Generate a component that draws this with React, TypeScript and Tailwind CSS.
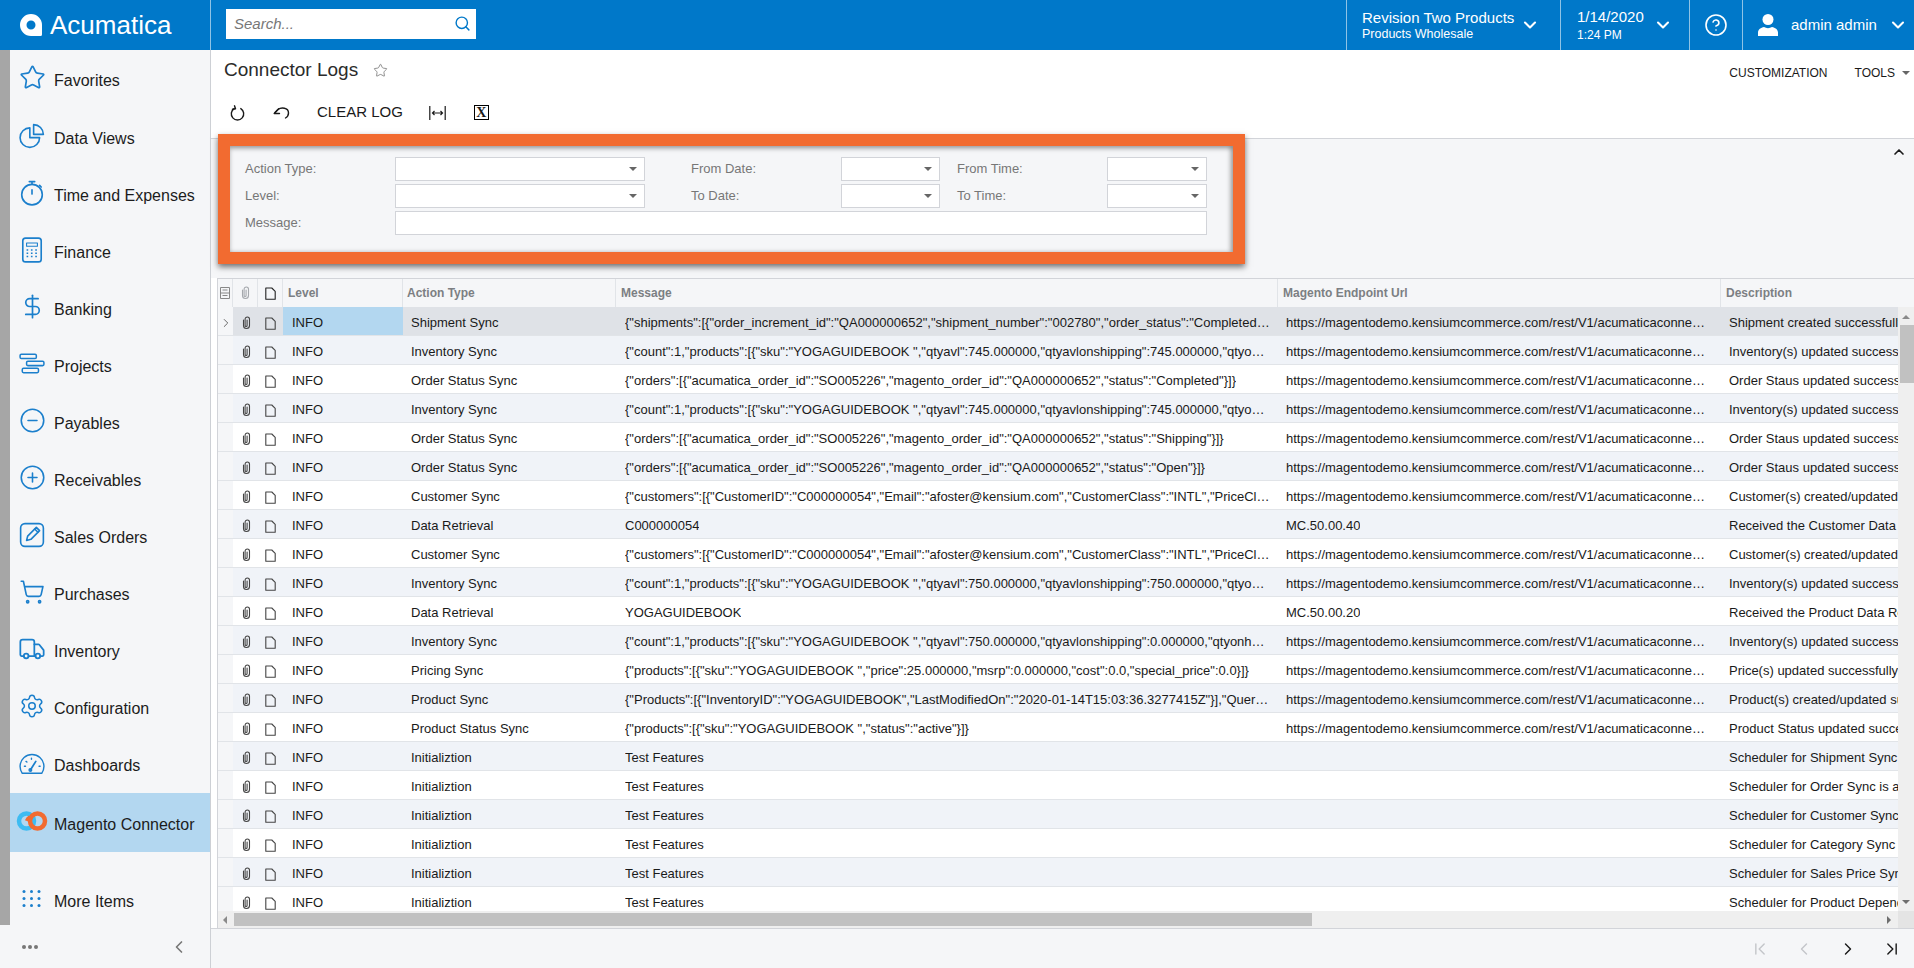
import React from "react";
import {
  ChevronDown,
  ChevronFirst,
  ChevronLast,
  ChevronLeft,
  ChevronRight,
  ChevronUp,
  CircleHelp,
  CircleMinus,
  CirclePlus,
  DollarSign,
  Search,
  Settings,
  ShoppingCart,
  Star,
  Truck,
} from "lucide-react";

const ICON = "#1b7fcc";
const COLS = "grid grid-cols-[15px_25px_25px_120px_213px_662px_443px_300px]";

const svgProps = {
  width: 26,
  height: 26,
  viewBox: "0 0 24 24",
  fill: "none",
  stroke: ICON,
  strokeWidth: 1.5,
  strokeLinecap: "round" as const,
  strokeLinejoin: "round" as const,
};

function PieIcon() {
  return (
    <svg {...svgProps}>
      <path d="M10 4.5a9 9 0 1 0 9 9h-9z" />
      <path d="M13.5 1.5a9 9 0 0 1 9 9h-9z" />
    </svg>
  );
}

function TimerIcon() {
  return (
    <svg {...svgProps}>
      <circle cx="12" cy="13.5" r="9.5" />
      <path d="M12 4V1.5M9.5 1.5h5M19 5l1.5 1.5M12 9v4" />
    </svg>
  );
}

function CalcIcon() {
  return (
    <svg {...svgProps}>
      <rect x="3.5" y="1" width="17" height="22" rx="2.5" />
      <path d="M7 5.5h10v3H7z" strokeWidth="1" />
      <path
        d="M7 12h1.5M11 12h1.5M15 12h1.5M7 15h1.5M11 15h1.5M15 15h1.5M7 18h1.5M11 18h1.5M15 18h1.5"
        strokeWidth="1.3"
        strokeLinecap="butt"
      />
    </svg>
  );
}

function ProjectsIcon() {
  return (
    <svg {...svgProps} strokeWidth={1.4}>
      <rect x="1" y="3" width="15" height="4" rx="1.2" />
      <rect x="7" y="9.5" width="16" height="4" rx="1.2" />
      <rect x="3" y="16" width="15" height="4" rx="1.2" />
    </svg>
  );
}

function OrdersIcon() {
  return (
    <svg {...svgProps}>
      <rect x="1.5" y="1.5" width="21" height="21" rx="4" />
      <path d="M7 17l1-4 8-8 3 3-8 8z" />
      <path d="M14.5 6.5l3 3" />
    </svg>
  );
}

function GaugeIcon() {
  return (
    <svg {...svgProps} strokeWidth={1.3}>
      <path d="M3 21.5a11 11 0 1 1 18 0z" />
      <path d="M10.5 18.5l5-8" strokeWidth="1.6" />
      <circle cx="10.5" cy="18.5" r="1.2" />
      <path d="M5 15h1M6.5 10.5l1 .8M11.5 7.5v1M18.5 15h1" strokeDasharray="1 1" />
    </svg>
  );
}

function RingsIcon() {
  return (
    <svg width="32" height="20" viewBox="0 0 32 20" fill="none" strokeWidth="4.5">
      <circle cx="10.5" cy="10" r="7.5" stroke="#3dbcf2" />
      <circle cx="21.5" cy="10" r="7.5" stroke="#f26b30" />
      <path d="M14 6.5a7.5 7.5 0 0 0-3 3.5" stroke="#f26b30" />
    </svg>
  );
}

function DotsIcon() {
  const cells = [0, 1, 2];
  return (
    <svg width="26" height="26" viewBox="0 0 26 26" fill={ICON}>
      {cells.map((r) =>
        cells.map((c) => <circle key={`${r}-${c}`} cx={5 + c * 7.5} cy={5.5 + r * 7} r="1.5" />),
      )}
    </svg>
  );
}

function Logo() {
  return (
    <svg width="22" height="22" viewBox="0 0 22 22">
      <path
        fill="#fff"
        fillRule="evenodd"
        d="M11 0a11 11 0 0 1 11 11v9.5a1.5 1.5 0 0 1-1.5 1.5H11a11 11 0 0 1 0-22zm0 6.5a4.5 4.5 0 1 0 0 9 4.5 4.5 0 0 0 0-9z"
      />
    </svg>
  );
}

function Clip({ color = "#444" }: { color?: string }) {
  return (
    <svg width="9" height="14" viewBox="0 0 9 14" fill="none" stroke={color} strokeWidth="1.1" strokeLinecap="round">
      <path d="M1.5 4v5.5a3 3 0 0 0 6 0V3.2a2.2 2.2 0 0 0-4.4 0v6.3a1 1 0 0 0 2 0V4" />
    </svg>
  );
}

function Note({ color = "#444" }: { color?: string }) {
  return (
    <svg width="11" height="13" viewBox="0 0 11 13" fill="none" stroke={color} strokeWidth="1.1" strokeLinejoin="round">
      <path d="M.8 1h6l3.4 3.4v7.8H.8z" />
    </svg>
  );
}

function Caret() {
  return <span className="block border-x-[4px] border-t-[4px] border-x-transparent border-t-[#666]" />;
}

const navItems: { label: string; icon: React.ReactNode }[] = [
  { label: "Data Views", icon: <PieIcon /> },
  { label: "Time and Expenses", icon: <TimerIcon /> },
  { label: "Finance", icon: <CalcIcon /> },
  { label: "Banking", icon: <DollarSign size={27} color={ICON} strokeWidth={1.5} /> },
  { label: "Projects", icon: <ProjectsIcon /> },
  { label: "Payables", icon: <CircleMinus size={27} color={ICON} strokeWidth={1.4} /> },
  { label: "Receivables", icon: <CirclePlus size={27} color={ICON} strokeWidth={1.4} /> },
  { label: "Sales Orders", icon: <OrdersIcon /> },
  { label: "Purchases", icon: <ShoppingCart size={26} color={ICON} strokeWidth={1.5} /> },
  { label: "Inventory", icon: <Truck size={28} color={ICON} strokeWidth={1.5} /> },
  { label: "Configuration", icon: <Settings size={26} color={ICON} strokeWidth={1.4} /> },
  { label: "Dashboards", icon: <GaugeIcon /> },
];

function NavRow({ label, icon, className = "h-[57px]" }: { label: string; icon: React.ReactNode; className?: string }) {
  return (
    <div className={`flex items-center pl-2 pt-[2px] text-[16px] text-[#1c1c1c] ${className}`}>
      <span className="mb-[6px] flex w-7 justify-center">{icon}</span>
      <span className="ml-2 whitespace-nowrap">{label}</span>
    </div>
  );
}

const URL = "https://magentodemo.kensiumcommerce.com/rest/V1/acumaticaconnector/index/sync";
const INV_745 =
  '{"count":1,"products":[{"sku":"YOGAGUIDEBOOK ","qtyavl":745.000000,"qtyavlonshipping":745.000000,"qtyonhand":745.000000}]}';
const CUST =
  '{"customers":[{"CustomerID":"C000000054","Email":"afoster@kensium.com","CustomerClass":"INTL","PriceClass":"RETAIL"}]}';
const order = (s: string) =>
  `{"orders":[{"acumatica_order_id":"SO005226","magento_order_id":"QA000000652","status":"${s}"}]}`;

const rows: [string, string, string, string][] = [
  [
    "Shipment Sync",
    '{"shipments":[{"order_increment_id":"QA000000652","shipment_number":"002780","order_status":"Completed","items":[]}]}',
    URL,
    "Shipment created successfully",
  ],
  ["Inventory Sync", INV_745, URL, "Inventory(s) updated successfully"],
  ["Order Status Sync", order("Completed"), URL, "Order Staus updated successfully"],
  ["Inventory Sync", INV_745, URL, "Inventory(s) updated successfully"],
  ["Order Status Sync", order("Shipping"), URL, "Order Staus updated successfully"],
  ["Order Status Sync", order("Open"), URL, "Order Staus updated successfully"],
  ["Customer Sync", CUST, URL, "Customer(s) created/updated successfully"],
  ["Data Retrieval", "C000000054", "MC.50.00.40", "Received the Customer Data Response"],
  ["Customer Sync", CUST, URL, "Customer(s) created/updated successfully"],
  [
    "Inventory Sync",
    '{"count":1,"products":[{"sku":"YOGAGUIDEBOOK ","qtyavl":750.000000,"qtyavlonshipping":750.000000,"qtyonhand":750.000000}]}',
    URL,
    "Inventory(s) updated successfully",
  ],
  ["Data Retrieval", "YOGAGUIDEBOOK", "MC.50.00.20", "Received the Product Data Response"],
  [
    "Inventory Sync",
    '{"count":1,"products":[{"sku":"YOGAGUIDEBOOK ","qtyavl":750.000000,"qtyavlonshipping":0.000000,"qtyonhand":750.000000}]}',
    URL,
    "Inventory(s) updated successfully",
  ],
  [
    "Pricing Sync",
    '{"products":[{"sku":"YOGAGUIDEBOOK ","price":25.000000,"msrp":0.000000,"cost":0.0,"special_price":0.0}]}',
    URL,
    "Price(s) updated successfully",
  ],
  [
    "Product Sync",
    '{"Products":[{"InventoryID":"YOGAGUIDEBOOK","LastModifiedOn":"2020-01-14T15:03:36.3277415Z"}],"QueryParams":{"top":1}}',
    URL,
    "Product(s) created/updated successfully",
  ],
  ["Product Status Sync", '{"products":[{"sku":"YOGAGUIDEBOOK ","status":"active"}]}', URL, "Product Status updated successfully"],
  ["Initializtion", "Test Features", "", "Scheduler for Shipment Sync is active"],
  ["Initializtion", "Test Features", "", "Scheduler for Order Sync is active"],
  ["Initializtion", "Test Features", "", "Scheduler for Customer Sync is active"],
  ["Initializtion", "Test Features", "", "Scheduler for Category Sync is active"],
  ["Initializtion", "Test Features", "", "Scheduler for Sales Price Sync is active"],
  ["Initializtion", "Test Features", "", "Scheduler for Product Dependency is active"],
];

function Header() {
  return (
    <header className="flex h-[50px] shrink-0 bg-[#0078c9] text-white">
      <div className="flex w-[211px] shrink-0 items-center border-r border-[#8fc3e6] pl-5">
        <Logo />
        <span className="ml-2 text-[26px] leading-none">Acumatica</span>
      </div>
      <div className="ml-[15px] mt-[9px] flex h-[30px] w-[250px] items-center justify-between bg-white pl-[8px] pr-[5px]">
        <span className="text-[15px] italic text-[#777]">Search...</span>
        <Search size={17} color="#0078c9" strokeWidth={2} className="mb-[2px]" />
      </div>
      <div className="flex-1" />
      <div className="flex w-[214px] items-center justify-between whitespace-nowrap border-l border-[#8fc3e6] pl-[15px] pr-[20px]">
        <div className="flex flex-col">
          <span className="text-[15px] leading-[18px]">Revision Two Products</span>
          <span className="text-[12.5px] leading-[14px]">Products Wholesale</span>
        </div>
        <ChevronDown size={20} strokeWidth={2.5} />
      </div>
      <div className="flex w-[129px] items-center justify-between whitespace-nowrap border-l border-[#8fc3e6] pl-[16px] pr-[16px]">
        <div className="flex flex-col">
          <span className="text-[15px] leading-[20px]">1/14/2020</span>
          <span className="text-[12px] leading-[16px]">1:24 PM</span>
        </div>
        <ChevronDown size={20} strokeWidth={2.5} />
      </div>
      <div className="flex w-[53px] items-center justify-center border-l border-[#8fc3e6]">
        <CircleHelp size={24} strokeWidth={1.6} />
      </div>
      <div className="flex w-[172px] items-center justify-between whitespace-nowrap border-l border-[#8fc3e6] pl-[15px] pr-[6px]">
        <div className="flex items-center">
          <svg width="20" height="24" viewBox="0 0 20 24" fill="#fff" className="shrink-0">
            <circle cx="10" cy="6.5" r="5.5" />
            <path d="M0 23v-3.5c0-3 3-5 6-5.5 2.4 1.5 5.6 1.5 8 0 3 .5 6 2.5 6 5.5V23z" />
          </svg>
          <span className="ml-[13px] text-[15px]">admin admin</span>
        </div>
        <ChevronDown size={20} strokeWidth={2.5} color="#fff" />
      </div>
    </header>
  );
}

function Sidebar() {
  return (
    <aside className="flex w-[211px] shrink-0 flex-col border-r border-[#cdd0d5] bg-[#f5f6f8]">
      <nav className="flex h-[875px] flex-col border-l-[10px] border-[#a6a6a6]">
        <NavRow
          label="Favorites"
          className="h-[59px]"
          icon={<Star size={27} color={ICON} strokeWidth={1.5} />}
        />
        {navItems.map((item) => (
          <NavRow key={item.label} label={item.label} icon={item.icon} />
        ))}
        <div className="flex h-[59px] items-center bg-[#b3d7f0] pl-[6px] pt-[5px] text-[16px] text-[#1c1c1c]">
          <span className="mb-[8px] flex w-[32px] justify-center">
            <RingsIcon />
          </span>
          <span className="ml-[6px] whitespace-nowrap">Magento Connector</span>
        </div>
        <div className="flex-1" />
        <NavRow label="More Items" className="h-[48px]" icon={<DotsIcon />} />
      </nav>
      <div className="flex flex-1 items-center justify-between pl-[22px] pr-[21px]">
        <span className="flex gap-[2px]">
          <span className="h-[4px] w-[4px] rounded-full bg-[#777]" />
          <span className="h-[4px] w-[4px] rounded-full bg-[#777]" />
          <span className="h-[4px] w-[4px] rounded-full bg-[#777]" />
        </span>
        <ChevronLeft size={20} color="#777" strokeWidth={2} />
      </div>
    </aside>
  );
}

function Toolbar() {
  return (
    <div className="flex h-[47px] items-center pb-[4px] pl-[19px] text-[#1a1a1a]">
      <svg width="15" height="16" viewBox="0 0 15 16" fill="none" stroke="#1a1a1a" strokeWidth="1.4" strokeLinecap="round">
        <path d="M4.2 3.6a6.2 6.2 0 1 0 6.6 0" />
        <path d="M4.5 .8l1 3-3 .5" strokeLinejoin="round" />
      </svg>
      <svg className="ml-[28px]" width="17" height="13" viewBox="0 0 17 13" fill="none" stroke="#1a1a1a" strokeWidth="1.4" strokeLinecap="round" strokeLinejoin="round">
        <path d="M1.2 7.5l4.5-4.8M1.2 7.5h5.3" />
        <path d="M2 6.5l3-3c3-2.3 10.5-2.3 10.5 3.5 0 2.5-1.3 4-3 5" />
      </svg>
      <span className="ml-[27px] text-[15px]">CLEAR LOG</span>
      <svg className="ml-[26px]" width="17" height="14" viewBox="0 0 17 14" fill="none" stroke="#1a1a1a" strokeWidth="1.2">
        <path d="M.8 0v14M16.2 0v14M3.5 7h10M5.5 5L3.5 7l2 2M11.5 5l2 2-2 2" />
      </svg>
      <span className="ml-[28px] flex h-[15px] w-[15px] items-center justify-center border-[1.5px] border-black [font-family:Liberation_Serif,serif] text-[14px] font-bold leading-none">
        X
      </span>
    </div>
  );
}

function Combo({ className }: { className?: string }) {
  return (
    <div className={`flex h-[24px] items-center justify-end border border-[#d2d4d9] bg-white pr-[7px] ${className ?? ""}`}>
      <Caret />
    </div>
  );
}

function Filters() {
  return (
    <section className="flex h-[140px] shrink-0 justify-between border-t border-[#d2d4d9] bg-[#f5f6f8] pl-[7px] pr-[7px]">
      <div className="relative z-10 mt-[-5px] h-[130px] w-[1027px] bg-[#f26b30] p-[12px] shadow-[0_3px_6px_rgba(0,0,0,0.55)]">
        <div className="h-full bg-[#f5f6f8] pl-[15px] pt-[11px] text-[13px] text-[#777] shadow-[inset_0_3px_4px_rgba(0,0,0,0.25),inset_-3px_0_4px_rgba(0,0,0,0.25)]">
          <div className="grid grid-cols-[150px_250px_46px_150px_99px_17px_150px_100px] items-center gap-y-[3px]">
            <span>Action Type:</span>
            <Combo />
            <span />
            <span>From Date:</span>
            <Combo />
            <span />
            <span>From Time:</span>
            <Combo />
            <span>Level:</span>
            <Combo />
            <span />
            <span>To Date:</span>
            <Combo />
            <span />
            <span>To Time:</span>
            <Combo />
            <span>Message:</span>
            <div className="col-span-7 h-[24px] border border-[#d2d4d9] bg-white" />
          </div>
        </div>
      </div>
      <ChevronUp size={16} color="#1a1a1a" strokeWidth={2.5} className="mt-[5px]" />
    </section>
  );
}

function LogGrid() {
  return (
    <section className="ml-[6px] flex min-h-0 flex-1 flex-col border-l border-t border-[#d2d4d9]">
      <div className={`${COLS} h-[28px] shrink-0 overflow-hidden bg-[#f5f6f8] text-[12px] font-bold text-[#7c7f83]`}>
        <div className="flex items-center justify-center border-r border-[#e1e4e8]">
          <svg width="10" height="12" viewBox="0 0 10 12" fill="none" stroke="#888" strokeWidth="1">
            <path d="M.5.5h9v11h-9zM.5 6h9M2.5 3h5M2.5 8.5h5" />
          </svg>
        </div>
        <div className="flex items-center justify-center border-r border-[#e1e4e8]">
          <Clip color="#a5a8ad" />
        </div>
        <div className="flex items-center justify-center border-r border-[#e1e4e8]">
          <Note color="#222" />
        </div>
        <div className="flex items-center border-r border-[#e1e4e8] pl-[5px]">Level</div>
        <div className="flex items-center border-r border-[#e1e4e8] pl-[4px]">Action Type</div>
        <div className="flex items-center border-r border-[#e1e4e8] pl-[5px]">Message</div>
        <div className="flex items-center border-r border-[#e1e4e8] pl-[5px]">Magento Endpoint Url</div>
        <div className="flex items-center pl-[5px]">Description</div>
      </div>
      <div className="flex min-h-0 flex-1">
        <div className="min-w-0 flex-1 overflow-hidden">
          {rows.map(([action, message, endpoint, description], i) => {
            const selected = i === 0;
            const bg = selected ? "bg-[#dfe2e7]" : i % 2 === 1 ? "bg-[#f0f3f8]" : "bg-white";
            return (
              <div key={i} className={`${COLS} h-[29px] border-b border-[#e1e4e8] text-[13px] text-[#1a1a1a] ${bg}`}>
                <div className="flex items-center justify-center bg-[#f5f6f8] pt-[4px]">
                  {selected && <ChevronRight size={14} color="#555" strokeWidth={1.5} />}
                </div>
                <div className="flex items-center justify-center pl-[1px] pt-[4px]">
                  <Clip />
                </div>
                <div className="flex items-center justify-center pt-[4px]">
                  <Note />
                </div>
                <div className={`flex items-center pl-[9px] pt-[4px] ${selected ? "bg-[#b3d7f0]" : ""}`}>INFO</div>
                <div className="flex items-center pl-[8px] pt-[4px]">{action}</div>
                <div className="flex min-w-0 items-center pl-[9px] pr-[7px] pt-[4px]">
                  <span className="truncate">{message}</span>
                </div>
                <div className="flex min-w-0 items-center pl-[8px] pr-[15px] pt-[4px]">
                  <span className="truncate">{endpoint}</span>
                </div>
                <div className="flex min-w-0 items-center overflow-hidden whitespace-nowrap pl-[8px] pt-[4px]">{description}</div>
              </div>
            );
          })}
        </div>
        <div className="flex w-[16px] shrink-0 flex-col items-end bg-[#efefef] pt-[8px]">
          <span className="mr-[4px] border-x-[4px] border-b-[4px] border-x-transparent border-b-[#8a8a8a]" />
          <span className="mt-[6px] h-[58px] w-[14px] bg-[#c1c1c1]" />
          <span className="flex-1" />
          <span className="mb-[7px] mr-[4px] border-x-[4px] border-t-[4px] border-x-transparent border-t-[#6e6e6e]" />
        </div>
      </div>
      <div className="flex h-[17px] shrink-0 items-center bg-[#efefef]">
        <span className="ml-[5px] border-y-[4px] border-r-[4px] border-y-transparent border-r-[#8a8a8a]" />
        <span className="ml-[7px] h-[13px] w-[1078px] bg-[#c1c1c1]" />
        <span className="flex-1" />
        <span className="mr-[7px] border-y-[4px] border-l-[4px] border-y-transparent border-l-[#6e6e6e]" />
        <span className="h-[17px] w-[16px] bg-[#e4e4e4]" />
      </div>
    </section>
  );
}

export default function App() {
  return (
    <div className="flex h-screen w-screen flex-col overflow-hidden bg-white [font-family:Liberation_Sans,Arial,sans-serif]">
      <Header />
      <div className="flex min-h-0 flex-1">
        <Sidebar />
        <main className="flex min-w-0 flex-1 flex-col">
          <div className="flex h-[41px] shrink-0 items-center justify-between pl-[13px]">
            <div className="flex items-center">
              <h1 className="text-[19px] text-[#2b2b2b]">Connector Logs</h1>
              <Star size={15} color="#777" strokeWidth={1.3} className="ml-[15px]" />
            </div>
            <div className="mt-[4px] flex items-center pr-[3px] text-[12px] text-[#1a1a1a]">
              <span>CUSTOMIZATION</span>
              <span className="ml-[27px]">TOOLS</span>
              <span className="ml-[7px] mr-[1px]">
                <Caret />
              </span>
            </div>
          </div>
          <Toolbar />
          <Filters />
          <LogGrid />
          <footer className="flex h-[40px] shrink-0 items-center justify-end border-t border-[#d2d4d9] bg-[#f5f6f8]">
            <span className="flex w-[44px] justify-center">
              <ChevronFirst size={20} color="#c4c6ca" strokeWidth={1.7} />
            </span>
            <span className="flex w-[44px] justify-center">
              <ChevronLeft size={20} color="#c4c6ca" strokeWidth={1.7} />
            </span>
            <span className="flex w-[44px] justify-center">
              <ChevronRight size={20} color="#1a1a1a" strokeWidth={1.7} />
            </span>
            <span className="flex w-[44px] justify-center">
              <ChevronLast size={20} color="#1a1a1a" strokeWidth={1.7} />
            </span>
          </footer>
        </main>
      </div>
    </div>
  );
}
